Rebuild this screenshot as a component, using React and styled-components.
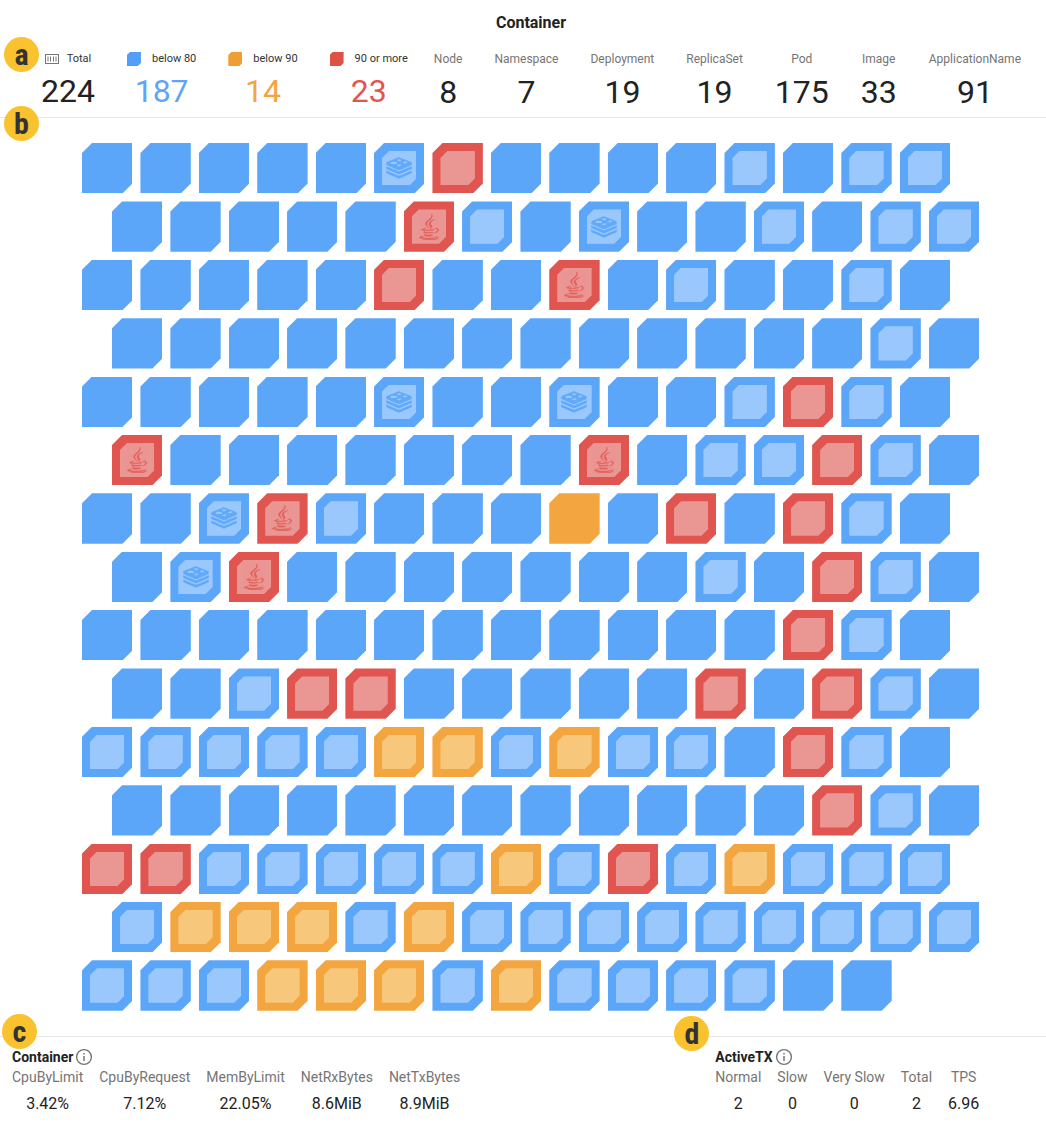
import React from "react";
import styled, { createGlobalStyle } from "styled-components";
import { FaJava } from "react-icons/fa";

const GlobalStyle = createGlobalStyle`
  * { box-sizing: border-box; }
  body {
    margin: 0;
    background: #fff;
    color: #222;
    font-family: Roboto, "Liberation Sans", sans-serif;
  }
`;

const tones = {
  blue: { solid: "#5ca6fa", light: "#9ac8fc", text: "#5ca6fa", swatch: "#529ffa" },
  orange: { solid: "#f3a53f", light: "#f7c77c", text: "#f3a53f", swatch: "#f09d34" },
  red: { solid: "#e15550", light: "#ea9693", text: "#e15550", swatch: "#de5147" },
};

const Page = styled.main`
  display: flex;
  flex-direction: column;
`;

const Header = styled.header`
  position: relative;
  height: 118px;
  border-bottom: 1px solid #e6e6e6;
`;

const Title = styled.h1`
  margin: 0;
  padding: 13px 0 0 16px;
  font-size: 16px;
  line-height: 20px;
  font-weight: 700;
  text-align: center;
`;

const Summary = styled.div`
  display: flex;
  justify-content: space-between;
  padding: 17px 25px 0 41px;
`;

const Group = styled.dl`
  display: flex;
  gap: ${(p) => p.$gap}px;
  margin: 0;
`;

const Stat = styled.div`
  display: flex;
  flex-direction: column;
  align-items: center;
`;

const LegendLabel = styled.dt`
  display: flex;
  align-items: center;
  gap: ${(p) => p.$gap || 11}px;
  font-size: 11px;
  line-height: 18px;
  color: #333;
`;

const StatLabel = styled.dt`
  font-size: 12px;
  line-height: 18px;
  color: #757575;
`;

const StatValue = styled.dd`
  margin: 0;
  font-size: 32px;
  line-height: 48px;
  color: #222;
`;

const LegendValue = styled(StatValue)`
  line-height: 46px;
  color: ${(p) => p.$color || "#222"};
`;

const Swatch = styled.span`
  width: 14px;
  height: 14px;
  background: ${(p) => p.$color};
  clip-path: polygon(3px 0, 100% 0, 100% 11px, 11px 100%, 0 100%, 0 3px);
`;

const Badge = styled.span`
  position: absolute;
  left: ${(p) => p.$left}px;
  top: ${(p) => p.$top}px;
  width: 35px;
  height: 35px;
  border-radius: 50%;
  background: #f9c22e;
  color: #333;
  font-family: "Roboto Condensed", "Liberation Sans Narrow", Roboto, sans-serif;
  font-size: 30px;
  line-height: 35px;
  font-weight: 700;
  text-align: center;
`;

const Board = styled.section`
  display: flex;
  flex-direction: column;
  gap: 8px;
  padding: 25px 67px 25px 82px;
`;

const TileRow = styled.div`
  display: grid;
  grid-template-columns: repeat(15, 1fr);
  gap: 8px;
  padding: ${(p) => (p.$shifted ? "0 0 0 30px" : "0 29px 0 0")};
`;

const Tile = styled.div`
  display: grid;
  aspect-ratio: 1;
  padding: 8px;
  background: ${(p) => p.$color};
  clip-path: polygon(10px 0, 100% 0, 100% calc(100% - 10px), calc(100% - 10px) 100%, 0 100%, 0 10px);
`;

const TileCore = styled.div`
  display: grid;
  place-items: center;
  background: ${(p) => p.$light};
  color: ${(p) => p.$color};
  clip-path: polygon(7px 0, 100% 0, 100% calc(100% - 7px), calc(100% - 7px) 100%, 0 100%, 0 7px);
`;

const JavaIcon = styled(FaJava)`
  width: 26px;
  height: 26px;
  stroke: currentColor;
  stroke-width: 8px;
  opacity: 0.85;
`;

const Footer = styled.footer`
  display: grid;
  grid-template-columns: 2fr 1fr;
  border-top: 1px solid #e6e6e6;
`;

const Panel = styled.section`
  position: relative;
  padding: 10px 0 6px ${(p) => p.$indent}px;
`;

const PanelTitle = styled.h2`
  display: flex;
  align-items: center;
  gap: 2px;
  margin: 0;
  font-size: 14px;
  line-height: 20px;
  font-weight: 700;
`;

const MetricLabel = styled.dt`
  font-size: 14px;
  line-height: 20px;
  color: #757575;
`;

const MetricValue = styled.dd`
  margin: 0;
  font-size: 16px;
  line-height: 34px;
`;

const rows = [
  "bbbbbKRbbbbBbBB",
  "bbbbbJBbKbbBbBB",
  "bbbbbRbbJbBbbBb",
  "bbbbbbbbbbbbbBb",
  "bbbbbKbbKbbBRBb",
  "JbbbbbbbJbBBRBb",
  "bbKJBbbbobRbRBb",
  "bKJbbbbbbbBbRBb",
  "bbbbbbbbbbbbRBb",
  "bbBRRbbbbbRbRBb",
  "BBBBBOOBOBBbRBb",
  "bbbbbbbbbbbbRBb",
  "RRBBBBBOBRBOBBB",
  "BOOOBOBBBBBBBBB",
  "BBBOOOBOBBBBbb",
];

function RedisIcon() {
  return (
    <svg width="26" height="22" viewBox="0 0 26 22" fill="currentColor" opacity="0.9" aria-hidden="true">
      <path
        fillRule="evenodd"
        d="M13 0.2L25 4.9Q25.8 5.3 25.8 6V7.3Q25.8 7.9 25 8.2L14 12.9Q13 13.3 12 12.9L1 8.2Q0.2 7.9 0.2 7.3V6Q0.2 5.3 1 4.9L12 0.4Q12.5 0.1 13 0.2Z
           M4.6 5.9A3.2 1.2 0 1 0 11 5.9A3.2 1.2 0 1 0 4.6 5.9Z
           M10.4 2.6L12.4 2.7L13 1.8L13.8 2.7L15.8 2.7L14.5 3.4L15 4.3L13.2 3.9L11.4 4.3L11.8 3.4Z
           M16.5 5.4L19.4 4.3L21.6 5.3L18.8 6.4Z
           M10.4 8L15.8 7.3L13.6 9.6Z"
      />
      <path d="M0.2 9.2L12 14.1Q13 14.5 14 14.1L25.8 9.2V11.3Q25.8 11.9 25 12.2L14 17Q13 17.4 12 17L1 12.2Q0.2 11.9 0.2 11.3Z" />
      <path d="M0.2 13.5L12 18.4Q13 18.8 14 18.4L25.8 13.5V15.6Q25.8 16.2 25 16.5L14 21.3Q13 21.7 12 21.3L1 16.5Q0.2 16.2 0.2 15.6Z" />
    </svg>
  );
}

const kinds = {
  b: { tone: tones.blue },
  o: { tone: tones.orange },
  B: { tone: tones.blue, core: true },
  O: { tone: tones.orange, core: true },
  R: { tone: tones.red, core: true },
  K: { tone: tones.blue, core: true, icon: <RedisIcon /> },
  J: { tone: tones.red, core: true, icon: <JavaIcon aria-hidden="true" /> },
};

const legend = [
  { label: "below 80", value: 187, tone: tones.blue },
  { label: "below 90", value: 14, tone: tones.orange },
  { label: "90 or more", value: 23, tone: tones.red },
];

const counts = [
  ["Node", 8],
  ["Namespace", 7],
  ["Deployment", 19],
  ["ReplicaSet", 19],
  ["Pod", 175],
  ["Image", 33],
  ["ApplicationName", 91],
];

const containerMetrics = [
  ["CpuByLimit", "3.42%"],
  ["CpuByRequest", "7.12%"],
  ["MemByLimit", "22.05%"],
  ["NetRxBytes", "8.6MiB"],
  ["NetTxBytes", "8.9MiB"],
];

const activeMetrics = [
  ["Normal", "2"],
  ["Slow", "0"],
  ["Very Slow", "0"],
  ["Total", "2"],
  ["TPS", "6.96"],
];

function ContainerIcon() {
  return (
    <svg width="14" height="10" viewBox="0 0 14 10" fill="none" stroke="#777" aria-hidden="true">
      <rect x="0.5" y="0.5" width="13" height="9" />
      <path d="M3 2.5v5M5.5 2.5v5M8.5 2.5v5M11 2.5v5" />
    </svg>
  );
}

function InfoIcon() {
  return (
    <svg width="18" height="18" viewBox="0 0 18 18" fill="none" stroke="#757575" aria-hidden="true">
      <circle cx="9" cy="9" r="7.4" strokeWidth="1.4" />
      <path d="M9 8v5M9 5v1.6" strokeWidth="1.5" />
    </svg>
  );
}

function Metrics({ items }) {
  return (
    <Group $gap={16}>
      {items.map(([label, value]) => (
        <Stat key={label}>
          <MetricLabel>{label}</MetricLabel>
          <MetricValue>{value}</MetricValue>
        </Stat>
      ))}
    </Group>
  );
}

export default function App() {
  return (
    <Page>
      <GlobalStyle />
      <Header>
        <Title>Container</Title>
        <Summary>
          <Group $gap={32}>
            <Stat>
              <LegendLabel $gap={8}>
                <ContainerIcon />
                Total
              </LegendLabel>
              <LegendValue>224</LegendValue>
            </Stat>
            {legend.map(({ label, value, tone }) => (
              <Stat key={label}>
                <LegendLabel>
                  <Swatch $color={tone.swatch} />
                  {label}
                </LegendLabel>
                <LegendValue $color={tone.text}>{value}</LegendValue>
              </Stat>
            ))}
          </Group>
          <Group $gap={32}>
            {counts.map(([label, value]) => (
              <Stat key={label}>
                <StatLabel>{label}</StatLabel>
                <StatValue>{value}</StatValue>
              </Stat>
            ))}
          </Group>
        </Summary>
        <Badge $left={4} $top={37}>a</Badge>
        <Badge $left={4} $top={106}>b</Badge>
      </Header>
      <Board>
        {rows.map((row, r) => (
          <TileRow key={r} $shifted={r % 2 === 1}>
            {[...row].map((code, i) => {
              const { tone, core, icon } = kinds[code];
              return (
                <Tile key={i} $color={tone.solid}>
                  {core && (
                    <TileCore $light={tone.light} $color={tone.solid}>
                      {icon}
                    </TileCore>
                  )}
                </Tile>
              );
            })}
          </TileRow>
        ))}
      </Board>
      <Footer>
        <Panel $indent={12}>
          <Badge $left={2} $top={-23}>c</Badge>
          <PanelTitle>
            Container
            <InfoIcon />
          </PanelTitle>
          <Metrics items={containerMetrics} />
        </Panel>
        <Panel $indent={18}>
          <Badge $left={-23} $top={-21}>d</Badge>
          <PanelTitle>
            ActiveTX
            <InfoIcon />
          </PanelTitle>
          <Metrics items={activeMetrics} />
        </Panel>
      </Footer>
    </Page>
  );
}
